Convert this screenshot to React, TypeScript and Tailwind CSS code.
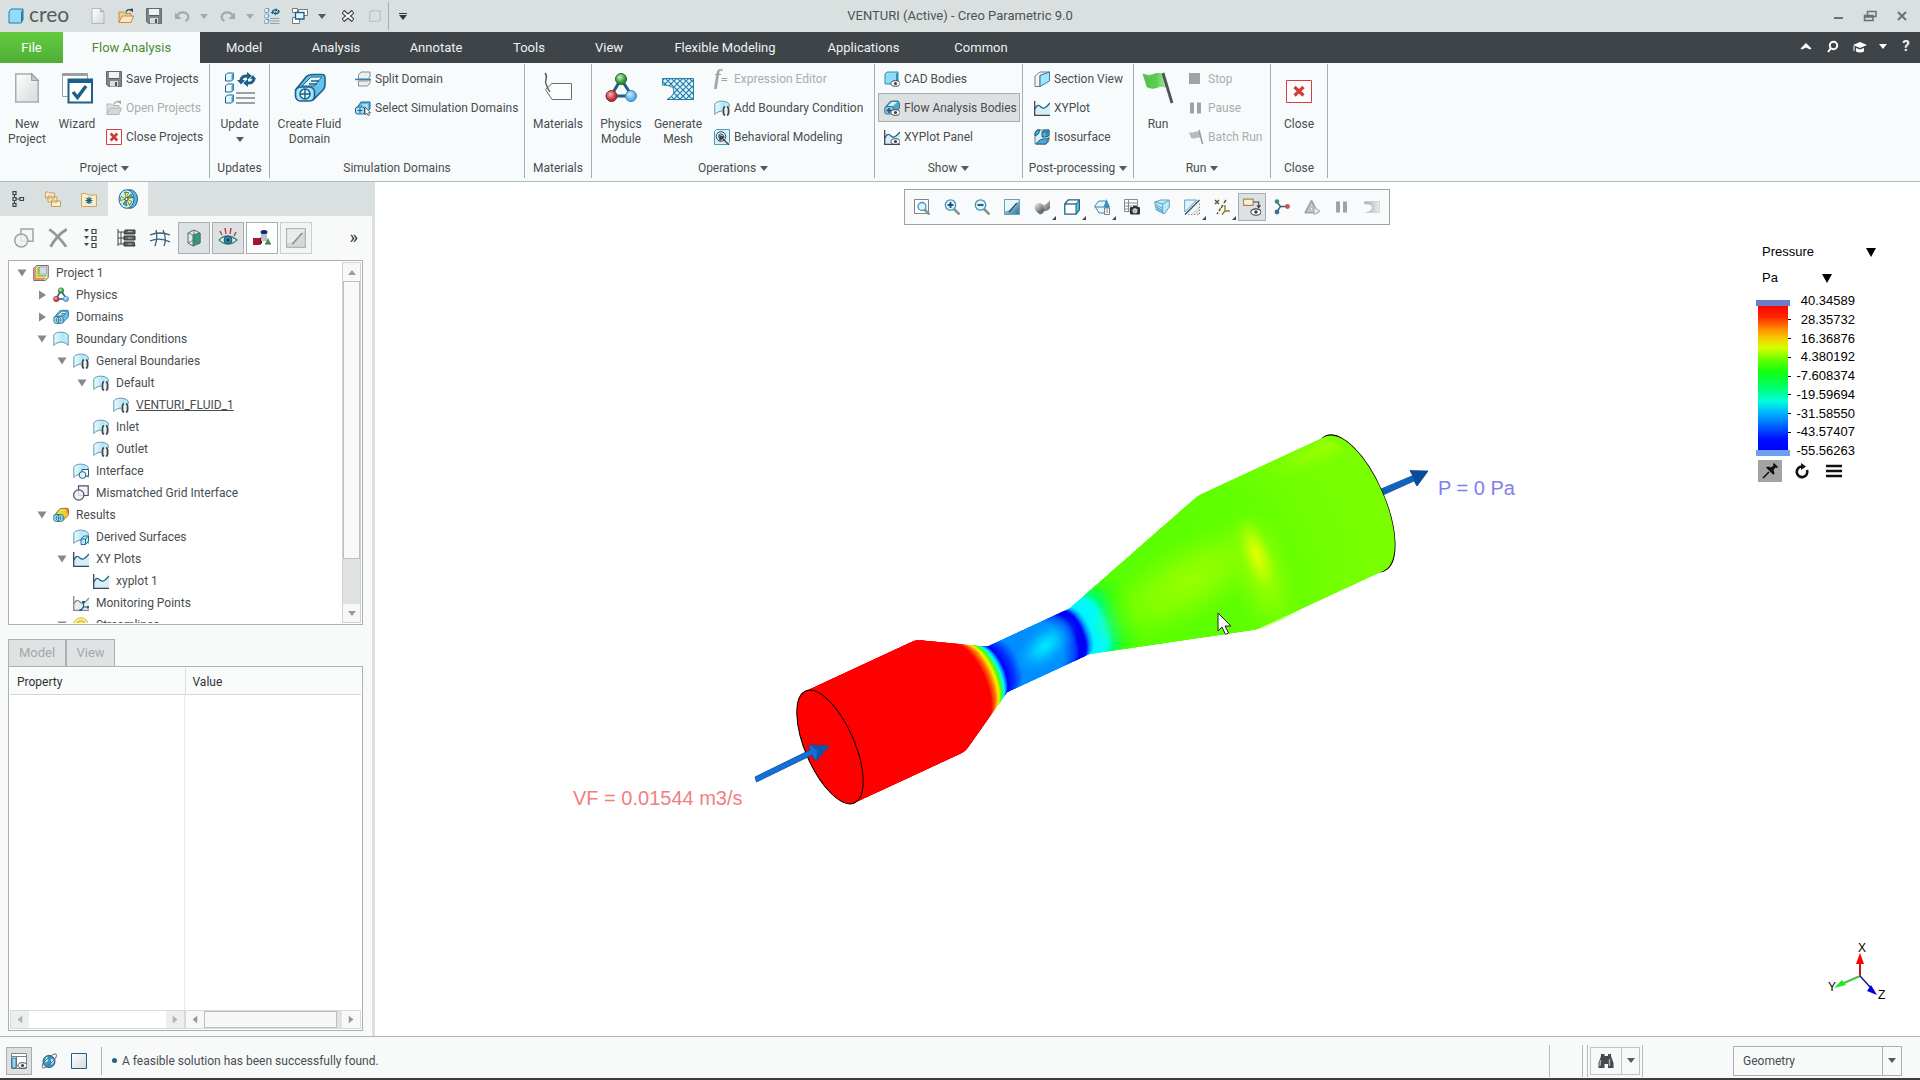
import React, { useState } from "react";

type IconProps = { className?: string };

const DARK = "#3f4549";
const BLUE = "#1b6187";
const SKY = "#a5e2fb";

// Shared svg wrapper, everything is drawn on a 16 or 32 grid
function Svg({ size = 16, className = "w-4 h-4", children }: { size?: number; className?: string; children: React.ReactNode }) {
  return (
    <svg viewBox={`0 0 ${size} ${size}`} className={`${className} shrink-0`} fill="none" aria-hidden="true">
      {children}
    </svg>
  );
}

const Caret = ({ className = "text-[#555a5d]" }: IconProps) => (
  <svg viewBox="0 0 8 5" className={`w-2 h-[5px] shrink-0 ${className}`} aria-hidden="true">
    <path d="M0 0h8L4 5z" fill="currentColor" />
  </svg>
);

/* ---------- file icons ---------- */
const PageIcon = ({ className }: IconProps) => (
  <Svg className={className}>
    <path d="M2 .5h8.500L14 4v11.500H2z" fill="url(#paper)" stroke="#a9adaf" strokeWidth=".8" />
    <path d="M10.500.5V4H14z" fill="#c8ccce" stroke="#999ea1" strokeWidth=".6" />
  </Svg>
);

const FolderIcon = ({ muted }: { muted?: boolean }) => (
  <Svg>
    <path d="M1 14V4h4.500L7 5.500h6V8" fill={muted ? "#e0e2e2" : "#f0cf94"} stroke={muted ? "#b4b7b8" : "#bd8f48"} />
    <path d="M1 14.500 4 8h11.500L13 14.500z" fill={muted ? "#d5d7d8" : "#fbe5bd"} stroke={muted ? "#b4b7b8" : "#bd8f48"} />
    <path d="M8 4.500C8.500 1.500 11 1 13 2.500" stroke={muted ? "#a6a9aa" : DARK} strokeWidth="1.300" />
    <path d="M11.200 1 15 .500V4.500z" fill={muted ? "#a6a9aa" : DARK} />
  </Svg>
);

const SaveIcon = () => (
  <Svg>
    <path d="M.5.500h15v15H2.500l-2-2z" fill="#7f868a" stroke="#62686b" />
    <path d="M3 1h10v6.500H3z" fill="#eff2f2" />
    <path d="M4 10h8v5.500H4z" fill="#d9dddf" />
    <path d="M9 11h2v4H9z" fill="#50565a" />
    <path d="M3 7.500h10" stroke="#555b5e" />
  </Svg>
);

const CloseBox = () => (
  <Svg>
    <path d="M.5.500h15v15H.5z" fill="#fffafa" stroke="#d3403f" />
    <path d="m4.700 4.500 6.600 7m0-7-6.600 7" stroke="#c73b3b" strokeWidth="2.600" />
  </Svg>
);

const CloseBoxLarge = () => (
  <svg viewBox="0 0 26 32" className="w-[26px] h-8" fill="none" aria-hidden="true">
    <path d="M.5 8.500h25v22H.5z" fill="#fff" stroke="#d8403f" />
    <path d="m8.500 15 9 8.500m0-8.500-9 8.500" stroke="#d33d3c" strokeWidth="3.200" />
  </svg>
);

const UndoIcon = ({ flip }: { flip?: boolean }) => (
  <Svg className={flip ? "w-4 h-4 -scale-x-100" : "w-4 h-4"}>
    <path d="M3 8c2-4.500 9-5 11-.5 1 2.500-.5 4.500-2.500 5.500" stroke="#a5a9aa" strokeWidth="2.200" />
    <path d="M1 4.500V11h6.500z" fill="#a5a9aa" />
  </Svg>
);

const UpdateIcon = ({ className }: IconProps) => (
  <Svg size={32} className={className}>
    {[1, 12, 23].map((y) => (
      <g key={y}>
        <path d={`M1.500 ${y + 2}l2-2h6v6l-2 2h-6z`} fill="#eaf8fe" stroke={BLUE} />
        <path d={`M7.500 ${y + 8}v-6l2-2v6z`} fill="#38a5d6" />
      </g>
    ))}
    <path d="M17 9c0-4 3-5.500 7-5M30 6c0 4-3 5.500-7 5" stroke={BLUE} strokeWidth="3" />
    <path d="M23 0l5 4-5 4zM24 7l-5 4 5 4z" fill={BLUE} />
    <path d="M13 8h8l-4 4.500zM26 7h6l-3-4z" fill={BLUE} />
    <path d="M12 21h19M12 26h19M12 31h19" stroke="#9ba0a3" strokeWidth="2" />
  </Svg>
);

const WindowsIcon = () => (
  <Svg>
    <path d="M6.500 1.500h9v6h-9z" fill="#fff" stroke="#73797c" />
    <path d="M.5 9.500h7v6h-7z" fill="#fff" stroke="#73797c" />
    <path d="M.5.500h5v4h-5z" fill="#fff" stroke="#73797c" />
    <path d="M3.500 4.500h8.500v6.500H3.500z" fill="#e4f5fc" stroke={BLUE} strokeWidth="1.300" />
  </Svg>
);

const WizardIcon = () => (
  <Svg size={32} className="w-8 h-8">
    <path d="M1.500 1.500h25v23h-25z" fill="#fff" stroke="#9a9fa2" />
    <path d="M1 1h26v3H1z" fill="#9a9fa2" />
    <path d="M7.500 7.500h23.500v23H7.500z" fill="#fff" stroke={BLUE} strokeWidth="2" />
    <path d="M7 7h25v4H7z" fill={BLUE} />
    <path d="m12 20 4.500 5.500L25 14" stroke={BLUE} strokeWidth="3.500" />
  </Svg>
);

/* ---------- domain icons ---------- */
const DomainIcon = ({ className, rainbow }: IconProps & { rainbow?: boolean }) => (
  <Svg size={32} className={className}>
    <path d="M1.500 18 12 5q2-2.500 7-2.500h9q3 0 3 3.500v7q0 3-2 5L19 28z" fill={rainbow ? "url(#rainbow)" : "#66c2e8"} stroke={rainbow ? "#876f22" : BLUE} strokeWidth="1.600" />
    <path d="m8 14 9-9h11l-8 9z" fill={rainbow ? "#d8ef4a" : "#dff4fc"} stroke={rainbow ? "none" : BLUE} />
    <path d="M15 12h8M17 9h8" stroke={rainbow ? "#f3b22d" : BLUE} strokeWidth="1.500" />
    <rect x="1.500" y="15" width="19" height="14" rx="5" fill={SKY} stroke={BLUE} strokeWidth="1.600" />
    <circle cx="11" cy="22" r="5" fill="#e7f8fe" stroke={BLUE} strokeWidth="1.500" />
    <path d="M11 17v10M6 22h10" stroke={BLUE} strokeWidth="1.500" />
  </Svg>
);

const SplitIcon = () => (
  <Svg>
    <path d="M3.500 4 6 1h9v5l-2.500 2h-9zM3.500 10h9L15 8v4l-2.500 3h-9z" fill="#eceff0" stroke="#878d90" />
    <path d="M0 8.500h16" stroke="#2c83b0" strokeWidth="1.500" />
  </Svg>
);

const SelectDomainIcon = () => (
  <Svg>
    <path d="M1 9 6 2h9v7l-5 5z" fill="#5db8df" stroke={BLUE} />
    <path d="M7 5h5M6 7h6M12 4v6" stroke="#e7f8fe" />
    <rect x=".5" y="7" width="9" height="7" rx="2" fill={SKY} stroke={BLUE} />
    <path d="M5 8v5M2.500 10.500h5" stroke={BLUE} />
    <path d="M10 7v8l2-1.800 1 2.500 1.500-.7-1-2.300h2z" fill="#fff" stroke={DARK} strokeWidth=".8" />
  </Svg>
);

const MaterialsIcon = () => (
  <Svg size={32} className="w-8 h-8">
    <path d="M3.500 17.500 10 11.500h19.500v16H10z" fill="#fcfdfd" stroke="#686e71" />
    <path d="M3 1c4 5-1 7 1 11 1 3 2 5 4 8" stroke="#51575a" strokeWidth="1.300" />
  </Svg>
);

const PhysicsIcon = ({ className }: IconProps) => (
  <Svg size={32} className={className}>
    <path d="M16 7 6 24h21z" stroke={BLUE} strokeWidth="3" />
    <circle cx="16" cy="7" r="5.500" fill="url(#ballG)" stroke="#236b23" />
    <circle cx="6.500" cy="24" r="5.500" fill="url(#ballR)" stroke="#842323" />
    <circle cx="26" cy="24" r="5.500" fill="url(#ballB)" stroke="#3b83b5" />
  </Svg>
);

const MeshIcon = () => (
  <Svg size={32} className="w-8 h-8">
    <path d="M.5 6.500h31v21H5q7-4 7-8.500 0-6-11.500-6z" fill="url(#mesh)" stroke="#2581aa" />
  </Svg>
);

const FxIcon = () => (
  <span className="w-4 h-5 shrink-0 whitespace-nowrap text-[20px] leading-[16px] italic font-bold text-[#9fa3a4] font-['Liberation_Serif',serif]" aria-hidden="true">
    f<span className="text-[12px]">=</span>
  </span>
);

// Curved sheet used by every boundary entry, with a small overlay per kind
const SheetIcon = ({ kind }: { kind?: "brackets" | "interface" | "derived" }) => (
  <Svg>
    <path d="M.8 4C3 .2 12 .2 15.200 4v10.500C12 10 4.500 10 .8 14.500z" fill="url(#sheet)" stroke="#5f99b0" />
    {kind === "brackets" && (
      <>
        <path d="M8 7h8v9H8z" fill="#eef6f9" />
        <path d="M10.800 6.500q-1.800 1.500-1.300 4.500-.5 3 1.300 4.500M13.200 6.500q1.800 1.500 1.300 4.500.5 3-1.300 4.500" stroke={DARK} strokeWidth="1.800" />
      </>
    )}
    {kind === "interface" && (
      <>
        <path d="M9 6.500h6.500V13H9z" fill="#fff" stroke={BLUE} />
        <circle cx="9.500" cy="12" r="3.400" fill="#e1f4fb" stroke={BLUE} />
      </>
    )}
    {kind === "derived" && <path d="m8 10 3-3h4.500v5l-3 3.500H8zM8 10h4.500v5.500M12.500 10l3-3" fill="#b8e8fa" stroke={BLUE} strokeWidth=".9" />}
  </Svg>
);

const BehaviorIcon = () => (
  <Svg>
    <path d="M.5 2.500 2.500.500h13v13l-2 2h-13z" fill="#dceff7" stroke="#4c9abc" />
    <circle cx="7" cy="7.500" r="4.800" stroke={DARK} />
    <circle cx="7" cy="7.500" r="2.500" stroke={BLUE} />
    <path d="m6 7 9 9M6 7v4l3.500-3z" stroke={DARK} strokeWidth="1.400" fill={DARK} />
  </Svg>
);

const Eye = () => (
  <>
    <ellipse cx="11.500" cy="12.500" rx="4.500" ry="2.800" fill="#fff" stroke={DARK} />
    <circle cx="11.500" cy="12.500" r="1.600" fill={DARK} />
  </>
);

const CadIcon = () => (
  <Svg>
    <path d="m1 3 2-2h11v10l-2 2H1z" fill="#8fdbf8" stroke="#2f8fb8" />
    <path d="M12 13V3l2-2v10z" fill="#2f8fb8" />
    <Eye />
  </Svg>
);

const FlowBodiesIcon = () => (
  <Svg>
    <path d="M1 8 5 2.500Q6 1 9 1h5l1.500 2v5L11 13z" fill="#50a9d0" stroke={BLUE} strokeWidth=".8" />
    <path d="m4 6 4-4h5l-4 4z" fill="#d9f3fc" />
    <rect x=".7" y="6.500" width="9" height="7.500" rx="2" fill="#79c9ea" stroke={BLUE} strokeWidth=".8" />
    <path d="M5 8v5M2.500 10.500h5" stroke={DARK} strokeWidth="1.400" />
    <Eye />
  </Svg>
);

const PlotIcon = ({ eye, monitor }: { eye?: boolean; monitor?: boolean }) => (
  <Svg>
    <path d="M1 9c2-5 4-4 6-2s4 2 9-4v12H1z" fill={monitor ? "#ececec" : "#d5eefa"} />
    <path d="M1 9c2-5 4-4 6-2s4 2 9-4" stroke={monitor ? "#84898c" : BLUE} strokeWidth="1.200" />
    <path d="M.7 1v14.400H16" stroke={monitor ? "#84898c" : DARK} strokeWidth="1.300" />
    {eye && <Eye />}
    {monitor && <path d="M10.500 7.500V12H15M10.500 12 8 15" stroke={BLUE} strokeWidth="1.200" />}
    {monitor && <path d="M9 6h3v2H9zM13.800 11H16v2.500h-2.200zM6.500 14H9v2H6.500z" fill={BLUE} />}
  </Svg>
);

const SectionIcon = () => (
  <Svg>
    <path d="m1 5 5-4h9.500L6 4.500v11L1 15.500z" fill="#f4f6f6" stroke="#777d80" />
    <path d="M6 4.500 15.500 1v9L6 15.500z" fill={SKY} stroke="#2b7ea6" />
  </Svg>
);

const IsoIcon = () => (
  <Svg>
    <path d="M1 4 3 1h12v11l-3 3H1z" fill="#d9f1fa" stroke="#777d80" />
    <path d="M1 7q4-1 5-6H3L1 4zM8 3l2-2h5v5l-2 2H8zM2 15q4-6 10-5l3-1-3 6z" fill="#4daad3" stroke={BLUE} />
    <path d="M8 3h5v5M13 3l2-2" stroke={BLUE} strokeWidth=".8" />
  </Svg>
);

const FlagIcon = () => (
  <Svg size={32} className="w-8 h-8">
    <path d="M1 2q6 2.500 10 .5t9-.5l4 13q-5-2-9 .5-5 2-10-.5z" fill="url(#flag)" stroke="#55b34c" strokeWidth=".6" />
    <path d="m21 1 9 30" stroke="#505457" strokeWidth="2.800" />
  </Svg>
);

const BatchIcon = () => (
  <Svg>
    <path d="M1 3q3 1 5 0t6 0l1 6q-3-1-5 0t-5 0z" fill="#b8bbbc" />
    <path d="m11 1 3.500 14" stroke="#999d9f" strokeWidth="1.500" />
  </Svg>
);

const StopIcon = () => (
  <Svg>
    <path d="M1 2h11v11H1z" fill="#a0a3a4" />
  </Svg>
);

const PauseIcon = () => (
  <Svg>
    <path d="M2 2.500h4v11H2zM9 2.500h4v11H9z" fill="#a0a3a4" />
  </Svg>
);

/* ---------- panel icons ---------- */
const TreeTabIcon = () => (
  <Svg>
    <path d="M2 .7h3v3H2zM2 6.500h3v3H2zM2 12.300h3v3H2zM9 6.500h3.500v3H9z" stroke={DARK} strokeWidth="1.200" />
    <path d="M3.500 4v2.500M3.500 9.500V12M5 8h4" stroke={DARK} />
  </Svg>
);

const FoldersTabIcon = () => (
  <Svg>
    <path d="M.5 1h3l1 1h5v5h-9zM3 5h3l1 1h5v5H3zM6.500 9h3l1 1h5v5.500h-9z" fill="#faebcb" stroke="#c79e57" />
  </Svg>
);

const FavoritesTabIcon = () => (
  <Svg>
    <path d="M.5 2.500h5L7 4h8.500v11.500H.5z" fill="#faebcb" stroke="#c9a866" />
    <path d="M8 6v7M4.500 9.500h7M5.500 7l5 5M10.500 7l-5 5" stroke={BLUE} strokeWidth="1.200" />
  </Svg>
);

const FanIcon = () => (
  <Svg size={20} className="w-5 h-5">
    <ellipse cx="12" cy="10" rx="7.500" ry="9.300" fill="#56bbe8" stroke={BLUE} />
    <ellipse cx="8.500" cy="10" rx="7.500" ry="9.300" fill="#c6eefc" stroke={BLUE} />
    <path d="m8.500 9-2-6 4 .5zM9 9l4-4 2 4zM9 10.500l5 2-2.500 4zM8 11l1 6-4-2zM7.500 10l-5 1.500.5-4z" fill="#54b948" stroke={DARK} strokeWidth=".6" />
    <path d="m8.500 9-1-5 2.500 0zM9 10.500l4.500 2-2 3zM7.500 10l-4.500 1v-3z" fill="#ffe13b" />
    <circle cx="8.500" cy="10" r="1.600" fill="#fff" stroke={DARK} />
  </Svg>
);

const ShapesIcon = ({ color = "#a0a4a6", className = "w-5 h-5" }: { color?: string; className?: string }) => (
  <Svg className={className}>
    <path d="M5.500.8h9.700v9.700H5.500z" fill="#f4f6f6" stroke={color} strokeWidth="1.200" />
    <circle cx="5.800" cy="10" r="5.200" fill="#f0f2f3cc" stroke={color} strokeWidth="1.200" />
  </Svg>
);

const DeleteIcon = () => (
  <Svg className="w-5 h-5">
    <path d="M1 1q7 5 13.500 14M15 1Q7 6 2 15" stroke="#939799" strokeWidth="2.200" />
  </Svg>
);

const ListIcon = () => (
  <Svg size={20} className="w-5 h-5">
    <path d="M10 1.500h4v4h-4zM10 8.500h4v4h-4zM10 15.500h4v4h-4z" stroke={DARK} strokeWidth="1.200" />
    <path d="M2 1h5L4.500 4zM2 8h5l-2.500 3zM2 15h5l-2.500 3z" fill={DARK} />
  </Svg>
);

const StackIcon = () => (
  <Svg size={20} className="w-5 h-5">
    <path d="M2 1v17M2 4h6M2 10h6M2 16h6M5 4v12" stroke={DARK} />
    <path d="M9 2h10v4H8zM8 8h11v4H8zM8 14h10l1 4H8z" fill="#5c6265" stroke="#333839" />
    <path d="M12 3.500h4M12 10h4M12 16h4" stroke="#aab0b3" />
  </Svg>
);

const GridCurveIcon = () => (
  <Svg size={20} className="w-5 h-5">
    <path d="M0 7q10-4 20 0M0 13q10-4 20 1M6 2q2 8-1 16M13 2q4 8 1 16" stroke="#366078" strokeWidth="1.300" />
  </Svg>
);

const CubeIcon = () => (
  <Svg size={20} className="w-5 h-5">
    <path d="m4 5 6-3 6 3v10l-7 3-5-3z" fill="#dfe9e8" stroke="#547075" />
    <path d="m9 7 7-2v10l-7 3z" fill="#2f9d72" stroke="#547075" />
    <path d="m4 5 5 2M10 2v10l-6 3M10 12l6 3" stroke="#547075" strokeWidth=".8" />
  </Svg>
);

const BigEyeIcon = () => (
  <Svg size={20} className="w-5 h-5">
    <path d="M1 12q8-8 18 0-9 8-18 0" fill="#e8f2f0" stroke="#3c8a84" strokeWidth="1.500" />
    <circle cx="10" cy="12" r="4" fill="#3b83ab" stroke="#21566f" />
    <circle cx="10" cy="12" r="1.500" fill="#17384b" />
    <path d="M4 7 2 3M8 6 7 0M12 6l1-6M16 8l2-4" stroke="#b63b47" strokeWidth="1.400" />
  </Svg>
);

const PartsIcon = () => (
  <Svg size={20} className="w-5 h-5">
    <path d="M1 10h7v7H1z" fill="#a3182a" />
    <path d="m8 10 2-2v7l-2 2z" fill="#6e0e1b" />
    <path d="M9 4h6v9H9z" fill="#b9c2cb" />
    <ellipse cx="12" cy="4" rx="3.500" ry="2" fill="#17207c" />
    <path d="m13 16 3-6 3 6z" fill="#3a9250" />
    <path d="M13 16h6" stroke="#5a6164" />
  </Svg>
);

const ShadeIcon = ({ muted }: { muted?: boolean }) => (
  <Svg className={muted ? "w-5 h-5" : "w-4 h-4"}>
    <path d="M.5.500h15v15H.5z" fill={muted ? "#d5d8d9" : "url(#shade)"} stroke={muted ? "#b1b5b6" : "#6a9fb7"} />
    <path d="M1 1h14Q11 12 1 12z" fill={muted ? "#e9ebec" : "#eaf7fc"} />
    <path d="m5 13 8-9" stroke={muted ? "#8d9193" : "#17516f"} strokeWidth="1.400" />
  </Svg>
);

const ProjectIcon = () => (
  <Svg>
    <path d="m.7 3 3-2.500h11.600v12l-3 3H.7z" fill="#d9dcdd" stroke="#6d7275" />
    <path d="M1.200 3.500 3 2v11h9.500L11 15H1.200z" fill="#f28b5b" />
    <path d="M3 2.500h1.500v9H13l-1 1.500H3z" fill="#ecdf52" />
    <path d="M4.500 2h1.500v8h8l-1 1.500H4.500z" fill="#82cc5d" />
    <path d="M6.500 2h7v7h-7z" fill="#d9dcdd" stroke="#8b9092" strokeWidth=".6" />
  </Svg>
);

const StreamIcon = () => (
  <Svg>
    <circle cx="8" cy="8" r="7.300" fill="#faf07a" stroke="#d6c33d" />
    <circle cx="8" cy="8" r="4" stroke="#e99b3a" strokeWidth="1.200" />
  </Svg>
);

/* ---------- view toolbar icons ---------- */
const Lens = ({ kind }: { kind: "fit" | "in" | "out" }) => (
  <Svg>
    {kind === "fit" && <path d="M.5.500h14v14H.5z" fill="#fff" stroke="#7d8386" />}
    <path d="m10 10 5.500 5.500" stroke="#8c9194" strokeWidth="2.600" />
    <circle cx={kind === "fit" ? 8 : 6.500} cy={kind === "fit" ? 7.500 : 6} r={kind === "fit" ? 4 : 5.200} fill="#dff3fc" stroke="#4a92b6" strokeWidth="1.300" />
    {kind !== "fit" && <path d="M3.500 6h6" stroke="#124d6d" strokeWidth="1.800" />}
    {kind === "in" && <path d="M6.500 3v6" stroke="#124d6d" strokeWidth="1.800" />}
  </Svg>
);

const RenderIcon = () => (
  <Svg>
    <path d="M7 6q5 1 9-5v8q-3 4-8 3z" fill="url(#metal)" />
    <circle cx="5" cy="8.500" r="4.500" fill="url(#metal)" />
    <path d="M2 12q5 1 7-4l2 3q-2 4-5 4.500z" fill="#6a6e70" />
  </Svg>
);

const BoxIcon = () => (
  <Svg>
    <path d="m.8 5 3.500-4.200h11v10L12 15.200H.8z" fill="#fff" stroke={BLUE} strokeWidth="1.300" />
    <path d="M12 15V5l3.300-4.200v10z" fill="#65b9de" stroke={BLUE} />
    <path d="M.8 5H12" stroke={BLUE} strokeWidth="1.300" />
  </Svg>
);

const OrientIcon = () => (
  <Svg>
    <path d="m.7 7 4-5h7l3 5v7H5z" fill="#e3f5fc" stroke="#3a87ab" />
    <path d="M12.500 0 16 8q-3 2-6.500 0z" fill="#3691bc" />
    <path d="M.7 8h10" stroke="#3a87ab" />
    <path d="M10.500 9h5v6.500h-5z" fill="#fff" stroke="#777c7f" />
    <path d="M12 11h2M12 13h2" stroke="#777c7f" />
  </Svg>
);

const CameraListIcon = () => (
  <Svg>
    <path d="M.5.500h13v12H.5zM.5 4h13M.5 7h8M.5 10h6M4.500.5v12" fill="#fff" stroke="#878c8f" />
    <rect x="6" y="8" width="10" height="7.500" rx="1" fill="#303436" />
    <path d="M9 6.500h4V9H9z" fill="#303436" />
    <circle cx="11" cy="11.800" r="2.200" fill="#b7bcbe" stroke="#fff" strokeWidth=".6" />
  </Svg>
);

const ClipIcon = () => (
  <Svg>
    <path d="m.7 3 6-2h8.600v7l-5 7-8-4z" fill="#bfe8f8" stroke="#5fa3c0" />
    <path d="m.7 3 8 2 6-3.500M8.700 5v9" stroke="#5fa3c0" />
    <path d="m2 8 6 3M3 10l6 3M2 6l6 3" stroke="#438db1" strokeWidth=".8" />
  </Svg>
);

const DatumIcon = () => (
  <Svg>
    <path d="M.7 13V1h12z" fill="#e3f5fc" stroke="#62a2bf" />
    <path d="M1 15.500 15.500 1" stroke="#2e5a70" strokeWidth="1.500" />
    <path d="M4 15.500h11.500V4" stroke="#8d9294" strokeDasharray="1.500 1.500" />
    <path d="M7 15 15 7v8z" fill="#dfe1e2" />
  </Svg>
);

const AxesIcon = () => (
  <Svg>
    <path d="m1 1 4 4M5 1 1 5M10 4l2-3M7 9l2-3M5 12l1.500-2.500M3 15l1-1.500" stroke="#665c22" strokeWidth="1.500" />
    <path d="M11 6v6h5M11 12l-3 3.500" stroke="#8b7c31" strokeWidth="1.400" />
  </Svg>
);

const AnnotationIcon = () => (
  <Svg className="w-[18px] h-[18px]">
    <path d="M.5 1h8.500v5.500H.5z" fill="#fff0d4" stroke="#9f8a65" />
    <path d="M9 3.500h5V7" stroke={DARK} />
    <path d="M12 6.500h4L14 9.500z" fill={DARK} />
    <Eye />
  </Svg>
);

const SpinIcon = () => (
  <Svg>
    <path d="m6.500 7.500-4-5m4 5-4 6m4-6h7" stroke="#37617a" strokeWidth="1.400" />
    <circle cx="3" cy="2.500" r="2.300" fill="#359368" />
    <circle cx="3" cy="13" r="2.400" fill="#396f9f" />
    <circle cx="13.500" cy="7.500" r="2.400" fill="#c6505b" />
  </Svg>
);

const WarnIcon = () => (
  <Svg>
    <path d="M7.500 2 1.500 13.500h12z" fill="#d9dbdc" stroke="#a3a7a9" strokeWidth="2.200" strokeLinejoin="round" />
    <path d="m7.500 7-2 4h4z" fill="#fff" stroke="#a3a7a9" />
    <path d="M10 8.500v7l6-3.500z" fill="#eceeee" stroke="#a7abad" />
  </Svg>
);

const ResultMutedIcon = () => (
  <Svg>
    <path d="M.5 2.500h15v11H2q6-1 6-5T.5 5z" fill="url(#metalSoft)" stroke="#c3c6c8" strokeWidth=".6" />
  </Svg>
);

/* ---------- ribbon ---------- */
type Small = { icon: React.ReactNode; label: string; muted?: boolean; active?: boolean };

function SmallList({ items, className = "" }: { items: Small[]; className?: string }) {
  return (
    <div className={`flex flex-col ${className}`}>
      {items.map((item) => (
        <button
          key={item.label}
          type="button"
          disabled={item.muted}
          className={`flex items-center gap-1 h-[29px] pl-[5px] text-left whitespace-nowrap border ${
            item.active ? "bg-[#dde0e1] border-[#a8acae]" : "border-transparent"
          } ${item.muted ? "text-[#a9adaf]" : ""}`}
        >
          {item.icon}
          {item.label}
        </button>
      ))}
    </div>
  );
}

function BigButton({ icon, label, className, caret }: { icon: React.ReactNode; label: string; className: string; caret?: boolean }) {
  return (
    <button type="button" className={`flex flex-col items-center pt-2 leading-[15px] text-center ${className}`}>
      <span className="flex items-center justify-center h-8 mb-[13px]">{icon}</span>
      <span>{label}</span>
      {caret && <Caret className="mt-[5px] text-[#555a5d]" />}
    </button>
  );
}

function Group({ label, caret, className, children }: { label: string; caret?: boolean; className: string; children: React.ReactNode }) {
  return (
    <section className={`flex flex-col shrink-0 border-r border-[#a9afb2] ${className}`}>
      <div className="flex flex-1">{children}</div>
      <div className="flex items-center justify-center gap-1 h-5">
        {label}
        {caret && <Caret />}
      </div>
    </section>
  );
}

function Ribbon() {
  return (
    <div className="flex h-[119px] pt-px pb-[3px] bg-[#f8fbfb] border-b border-[#afb8bb]">
      <Group label="Project" caret className="w-[210px]">
        <BigButton icon={<PageIcon className="w-[30px] h-8" />} label="New Project" className="w-[54px] px-1" />
        <BigButton icon={<WizardIcon />} label="Wizard" className="w-[46px]" />
        <SmallList
          items={[
            { icon: <SaveIcon />, label: "Save Projects" },
            { icon: <FolderIcon muted />, label: "Open Projects", muted: true },
            { icon: <CloseBox />, label: "Close Projects" },
          ]}
        />
      </Group>
      <Group label="Updates" className="w-[60px]">
        <BigButton icon={<UpdateIcon className="w-8 h-8" />} label="Update" className="w-full" caret />
      </Group>
      <Group label="Simulation Domains" className="w-[255px]">
        <BigButton icon={<DomainIcon className="w-8 h-8" />} label="Create Fluid Domain" className="w-[79px] px-1" />
        <SmallList
          items={[
            { icon: <SplitIcon />, label: "Split Domain" },
            { icon: <SelectDomainIcon />, label: "Select Simulation Domains" },
          ]}
        />
      </Group>
      <Group label="Materials" className="w-[67px]">
        <BigButton icon={<MaterialsIcon />} label="Materials" className="w-full" />
      </Group>
      <Group label="Operations" caret className="w-[283px]">
        <BigButton icon={<PhysicsIcon className="w-8 h-8" />} label="Physics Module" className="w-[58px] px-1" />
        <BigButton icon={<MeshIcon />} label="Generate Mesh" className="w-[56px]" />
        <SmallList
          className="ml-[2px]"
          items={[
            { icon: <FxIcon />, label: "Expression Editor", muted: true },
            { icon: <SheetIcon kind="brackets" />, label: "Add Boundary Condition" },
            { icon: <BehaviorIcon />, label: "Behavioral Modeling" },
          ]}
        />
      </Group>
      <Group label="Show" caret className="w-[148px]">
        <SmallList
          className="w-[142px] ml-[3px]"
          items={[
            { icon: <CadIcon />, label: "CAD Bodies" },
            { icon: <FlowBodiesIcon />, label: "Flow Analysis Bodies", active: true },
            { icon: <PlotIcon eye />, label: "XYPlot Panel" },
          ]}
        />
      </Group>
      <Group label="Post-processing" caret className="w-[111px]">
        <SmallList
          className="ml-[5px]"
          items={[
            { icon: <SectionIcon />, label: "Section View" },
            { icon: <PlotIcon />, label: "XYPlot" },
            { icon: <IsoIcon />, label: "Isosurface" },
          ]}
        />
      </Group>
      <Group label="Run" caret className="w-[137px]">
        <BigButton icon={<FlagIcon />} label="Run" className="w-[48px]" />
        <SmallList
          items={[
            { icon: <StopIcon />, label: "Stop", muted: true },
            { icon: <PauseIcon />, label: "Pause", muted: true },
            { icon: <BatchIcon />, label: "Batch Run", muted: true },
          ]}
        />
      </Group>
      <Group label="Close" className="w-[57px]">
        <BigButton icon={<CloseBoxLarge />} label="Close" className="w-full" />
      </Group>
    </div>
  );
}

/* ---------- title bar and tabs ---------- */
function TitleBar() {
  return (
    <header className="flex items-center relative h-8 bg-[#dae0df]">
      <div className="flex items-center gap-[5px] w-[86px] pl-2 text-[21px] text-[#565b5e] font-[Lato,sans-serif]">
        <Svg>
          <path d="m1 4 2-3h12v11l-2 3H1z" fill="#93dcf9" stroke="#2a7da5" />
          <path d="M13 15V4l2-3v11z" fill="#2a7da5" />
        </Svg>
        <span className="leading-5 pb-1">creo</span>
      </div>
      <div className="flex items-center text-[13px]">
        <button type="button" aria-label="New" className="flex justify-center w-6"><PageIcon /></button>
        <button type="button" aria-label="Open" className="flex justify-center w-8"><FolderIcon /></button>
        <button type="button" aria-label="Save" className="flex justify-center w-6"><SaveIcon /></button>
        <button type="button" aria-label="Undo" className="flex justify-center w-8"><UndoIcon /></button>
        <button type="button" aria-label="Undo list" className="flex justify-center w-3"><Caret className="text-[#a5a9aa]" /></button>
        <button type="button" aria-label="Redo" className="flex justify-center w-9"><UndoIcon flip /></button>
        <button type="button" aria-label="Redo list" className="flex justify-center w-2"><Caret className="text-[#a5a9aa]" /></button>
        <button type="button" aria-label="Regenerate" className="flex justify-center w-9"><UpdateIcon className="w-4 h-4" /></button>
        <button type="button" aria-label="Windows" className="flex justify-center w-5"><WindowsIcon /></button>
        <button type="button" aria-label="Window list" className="flex justify-center w-6"><Caret /></button>
        <button type="button" aria-label="Close window" className="flex justify-center w-7">
          <Svg className="w-3 h-3">
            <path d="m1 2 14 12M15 2 1 14" stroke={DARK} strokeWidth="6" />
            <path d="m2 3 12 10M14 3 2 13" stroke="#fff" strokeWidth="2.800" />
          </Svg>
        </button>
        <button type="button" aria-label="Bodies" className="flex justify-center w-[26px]">
          <Svg className="w-3 h-3"><path d="M1 3 3 1h12v12l-2 2H1z" stroke="#b9bdbe" strokeWidth="1.500" /></Svg>
        </button>
        <span className="w-px h-7 bg-[#a7acad]" />
        <button type="button" aria-label="Customize" className="flex flex-col items-center w-7 gap-px text-[#33383a]">
          <span className="w-2 h-px bg-current" />
          <Caret className="text-[#33383a]" />
        </button>
      </div>
      <h1 className="absolute inset-x-0 text-center text-[13px] text-[#4d5255] pointer-events-none">VENTURI (Active) - Creo Parametric 9.0</h1>
      <div className="flex items-center gap-4 ml-auto pr-[10px]">
        <button type="button" aria-label="Minimize"><Svg><path d="M4 10h9" stroke="#6b7072" strokeWidth="2" /></Svg></button>
        <button type="button" aria-label="Restore"><Svg><path d="M5.500 7V3.500h8.500v5h-3M2.500 7.500h8.500v5H2.500zM2.500 9h8.500" stroke="#6b7072" strokeWidth="1.500" /></Svg></button>
        <button type="button" aria-label="Close"><Svg><path d="m4 4 8 8M12 4l-8 8" stroke="#6b7072" strokeWidth="2" /></Svg></button>
      </div>
    </header>
  );
}

const TABS = [
  { label: "Model", width: "w-[88px]" },
  { label: "Analysis", width: "w-[96px]" },
  { label: "Annotate", width: "w-[104px]" },
  { label: "Tools", width: "w-[82px]" },
  { label: "View", width: "w-[78px]" },
  { label: "Flexible Modeling", width: "w-[154px]" },
  { label: "Applications", width: "w-[123px]" },
  { label: "Common", width: "w-[112px]" },
];

function TabBar() {
  return (
    <nav className="flex h-[31px] bg-[#3e4448] text-[13px] text-[#eef1f2]">
      <button type="button" className="w-[63px] bg-linear-to-b from-[#63cc3d] to-[#4fae38] text-white">File</button>
      <button type="button" className="w-[137px] bg-[#f8fbfb] text-[#4c8a35]">Flow Analysis</button>
      {TABS.map((tab) => (
        <button key={tab.label} type="button" className={tab.width}>{tab.label}</button>
      ))}
      <div className="flex items-center gap-[11px] ml-auto pr-[6px] pb-[2px]">
        <button type="button" aria-label="Collapse ribbon"><Svg><path d="M2.500 9.500 8 4l5.500 5.500-1.500 1-4-2-4 2z" fill="#fff" /></Svg></button>
        <button type="button" aria-label="Search">
          <Svg><circle cx="8.500" cy="6.500" r="3.700" stroke="#fff" strokeWidth="2" /><path d="m6 9-3 4" stroke="#fff" strokeWidth="2" /></Svg>
        </button>
        <button type="button" aria-label="Learning">
          <Svg><path d="m1 6 7-3 7 3-7 3zM4 9v3.500q4 2 8 0V9L8 10.500zM1.500 7h1v5h-1z" fill="#fff" /></Svg>
        </button>
        <button type="button" aria-label="Learning list"><Caret className="text-white" /></button>
        <button type="button" aria-label="Help" className="w-4 font-bold text-[15px]">?</button>
      </div>
    </nav>
  );
}

/* ---------- left panel ---------- */
type Node = { label: string; level: number; icon: React.ReactNode; open?: boolean; closed?: boolean; selected?: boolean };

const NODES: Node[] = [
  { label: "Project 1", level: 0, icon: <ProjectIcon />, open: true },
  { label: "Physics", level: 1, icon: <PhysicsIcon className="w-4 h-4" />, closed: true },
  { label: "Domains", level: 1, icon: <DomainIcon className="w-4 h-4" />, closed: true },
  { label: "Boundary Conditions", level: 1, icon: <SheetIcon />, open: true },
  { label: "General Boundaries", level: 2, icon: <SheetIcon kind="brackets" />, open: true },
  { label: "Default", level: 3, icon: <SheetIcon kind="brackets" />, open: true },
  { label: "VENTURI_FLUID_1", level: 4, icon: <SheetIcon kind="brackets" />, selected: true },
  { label: "Inlet", level: 3, icon: <SheetIcon kind="brackets" /> },
  { label: "Outlet", level: 3, icon: <SheetIcon kind="brackets" /> },
  { label: "Interface", level: 2, icon: <SheetIcon kind="interface" /> },
  { label: "Mismatched Grid Interface", level: 2, icon: <ShapesIcon color="#514a75" className="w-4 h-4" /> },
  { label: "Results", level: 1, icon: <DomainIcon className="w-4 h-4" rainbow />, open: true },
  { label: "Derived Surfaces", level: 2, icon: <SheetIcon kind="derived" /> },
  { label: "XY Plots", level: 2, icon: <PlotIcon />, open: true },
  { label: "xyplot 1", level: 3, icon: <PlotIcon /> },
  { label: "Monitoring Points", level: 2, icon: <PlotIcon monitor /> },
  { label: "Streamlines", level: 2, icon: <StreamIcon />, open: true },
];

// 20px per level
const INDENT = ["pl-[2px]", "pl-[22px]", "pl-[42px]", "pl-[62px]", "pl-[82px]"];

function Triangle({ node }: { node: Node }) {
  return (
    <svg viewBox="0 0 10 10" className="w-[10px] h-[10px] ml-[5px] mr-[6px] shrink-0" fill="#85898c" aria-hidden="true">
      {node.open && <path d="M.5 1.500h9L5 8.500z" />}
      {node.closed && <path d="M2 .5v9l7-4.500z" />}
    </svg>
  );
}

function Tree() {
  return (
    <div className="flex h-[365px] ml-2 mr-[9px] p-px border border-[#abb0b2] bg-white">
      <ul className="flex-1 overflow-hidden">
        {NODES.map((node) => (
          <li key={node.label} className={`flex items-center h-[22px] ${INDENT[node.level]}`}>
            <Triangle node={node} />
            {node.icon}
            <span className={`ml-[7px] whitespace-nowrap ${node.selected ? "underline" : ""}`}>{node.label}</span>
          </li>
        ))}
      </ul>
      <div className="flex flex-col w-[19px] border border-[#cfd3d4] bg-[#dfe1e2]">
        <button type="button" aria-label="Scroll up" className="flex items-center justify-center h-[18px] bg-[#f8f8f8]"><Caret className="rotate-180 text-[#9a9d9e]" /></button>
        <div className="h-[278px] border border-[#bcc0c1] bg-[#f8f8f8]" />
        <button type="button" aria-label="Scroll down" className="flex items-center justify-center h-[18px] mt-auto bg-[#f8f8f8]"><Caret className="text-[#9a9d9e]" /></button>
      </div>
    </div>
  );
}

const arrowClass = "flex items-center justify-center w-[18px] shrink-0";

function PropertyTable() {
  return (
    <div className="flex flex-col flex-1 ml-2 mr-[9px] p-px border border-[#abb0b2] bg-white">
      <table className="w-full text-left text-[#303436]">
        <thead>
          <tr className="h-[26px] border-b border-[#d5d8d9] bg-[#f9fafa]">
            <th className="w-[175px] pl-[7px] pt-[2px] font-normal border-r border-[#dcdfe0]">Property</th>
            <th className="pl-[7px] pt-[2px] font-normal">Value</th>
          </tr>
        </thead>
      </table>
      <div className="w-[175px] flex-1 border-r border-[#e8eaea]" />
      <div className="flex h-[19px]">
        <div className="flex w-[175px] border border-[#d6dbdc]">
          <button type="button" aria-label="Scroll left" className={`${arrowClass} bg-[#eceeef]`}><Caret className="rotate-90 text-[#b0b3b5]" /></button>
          <span className="flex-1" />
          <button type="button" aria-label="Scroll right" className={`${arrowClass} bg-[#eceeef]`}><Caret className="-rotate-90 text-[#b0b3b5]" /></button>
        </div>
        <div className="flex flex-1 border border-[#d6dbdc] bg-[#e0e2e3]">
          <button type="button" aria-label="Scroll left" className={`${arrowClass} bg-[#f8f8f8]`}><Caret className="rotate-90 text-[#96999b]" /></button>
          <span className="flex-1 mr-[5px] border border-[#bcc0c1] bg-[#f7f7f7]" />
          <button type="button" aria-label="Scroll right" className={`${arrowClass} bg-[#f8f8f8]`}><Caret className="-rotate-90 text-[#96999b]" /></button>
        </div>
      </div>
    </div>
  );
}

function LeftPanel() {
  const tool = "flex items-center justify-center w-8 h-8 border";
  return (
    <aside className="flex flex-col w-[375px] shrink-0 pb-[5px] bg-[#f8fafa] border-r-3 border-[#dadfe0]">
      <div className="flex h-[34px] pl-[2px] bg-[#dae0df]">
        <button type="button" aria-label="Model tree" className="flex items-center justify-center w-[34px]"><TreeTabIcon /></button>
        <button type="button" aria-label="Folders" className="flex items-center justify-center w-[34px]"><FoldersTabIcon /></button>
        <button type="button" aria-label="Favorites" className="flex items-center justify-center w-[38px]"><FavoritesTabIcon /></button>
        <button type="button" aria-label="Flow analysis" className="flex items-center justify-center w-10 bg-[#f8fafa]"><FanIcon /></button>
      </div>
      <div className="flex items-center gap-[2px] h-11 pl-2">
        <button type="button" aria-label="Shapes" className={`${tool} border-transparent`}><ShapesIcon /></button>
        <button type="button" aria-label="Delete" className={`${tool} border-transparent`}><DeleteIcon /></button>
        <button type="button" aria-label="List" className={`${tool} border-transparent`}><ListIcon /></button>
        <button type="button" aria-label="Stack" className={`${tool} border-transparent`}><StackIcon /></button>
        <button type="button" aria-label="Grid" className={`${tool} border-transparent`}><GridCurveIcon /></button>
        <button type="button" aria-label="Body" className={`${tool} border-[#a9adaf] bg-[#dde1e2]`}><CubeIcon /></button>
        <button type="button" aria-label="Visibility" className={`${tool} border-[#a9adaf] bg-[#dde1e2]`}><BigEyeIcon /></button>
        <button type="button" aria-label="Parts" className={`${tool} border-[#a9adaf] bg-white`}><PartsIcon /></button>
        <button type="button" aria-label="Shade" className={`${tool} border-[#cbcfd0] bg-[#f3f5f5]`}><ShadeIcon muted /></button>
        <button type="button" aria-label="More" className="ml-auto mr-[14px] pb-1 text-[18px] text-[#303436]">»</button>
      </div>
      <Tree />
      <div className="flex mt-[14px] ml-2 text-[13px] text-[#a4a8aa]">
        <button type="button" disabled className="w-[58px] h-[27px] border border-b-0 border-[#abb0b2] bg-[#e0e3e4]">Model</button>
        <button type="button" disabled className="w-[49px] h-[27px] border border-b-0 border-[#abb0b2] bg-[#e0e3e4]">View</button>
      </div>
      <PropertyTable />
    </aside>
  );
}

/* ---------- pressure field ---------- */
// axis position (x of section centre), rgb
const FIELD: [number, number[]][] = [
  [830, [255, 0, 0]],
  [969, [255, 0, 0]],
  [975, [255, 110, 0]],
  [980, [255, 240, 0]],
  [984, [80, 255, 0]],
  [988, [0, 255, 255]],
  [991, [0, 150, 255]],
  [994, [0, 0, 255]],
  [1001, [0, 50, 255]],
  [1010, [0, 140, 255]],
  [1050, [0, 145, 255]],
  [1062, [0, 70, 255]],
  [1067, [0, 0, 240]],
  [1073, [0, 0, 255]],
  [1077, [0, 160, 255]],
  [1081, [0, 245, 255]],
  [1092, [0, 255, 240]],
  [1098, [0, 255, 110]],
  [1108, [50, 255, 20]],
  [1122, [90, 255, 0]],
  [1240, [96, 255, 0]],
  [1290, [116, 255, 0]],
  [1355, [122, 255, 0]],
];

// axis position, section radius
const PROFILE: [number, number][] = [
  [830, 61],
  [938, 61],
  [996, 25],
  [1080, 25],
  [1229, 73],
  [1355, 73],
];

function colorAt(x: number) {
  const i = Math.max(1, FIELD.findIndex(([p]) => p >= x));
  const [x0, a] = FIELD[i - 1];
  const [x1, b] = FIELD[i];
  const t = (x - x0) / (x1 - x0);
  return `rgb(${a.map((c, k) => Math.round(c + (b[k] - c) * t)).join(",")})`;
}

function radiusAt(x: number) {
  const i = Math.max(1, PROFILE.findIndex(([p]) => p >= x));
  const [x0, a] = PROFILE[i - 1];
  const [x1, b] = PROFILE[i];
  return a + ((b - a) * (x - x0)) / (x1 - x0);
}

const axisY = (x: number) => 747 - (x - 830) * 0.464;

// Back to front, so every section covers the one behind it
const SECTIONS = Array.from({ length: 526 }, (_, i) => 1355 - i);

function Venturi() {
  return (
    <svg viewBox="740 420 720 410" className="absolute left-[365px] top-[238px] w-[720px] h-[410px]" role="img" aria-label="Venturi pressure field">
      <defs>
        <radialGradient id="hot"><stop offset="0" stopColor="#eaff00" /><stop offset=".45" stopColor="#c8ff00" stopOpacity=".7" /><stop offset="1" stopColor="#90ff00" stopOpacity="0" /></radialGradient>
        <radialGradient id="warm"><stop offset="0" stopColor="#98ff00" /><stop offset=".4" stopColor="#92ff00" stopOpacity=".75" /><stop offset="1" stopColor="#80ff00" stopOpacity="0" /></radialGradient>
        <radialGradient id="cool"><stop offset="0" stopColor="#00ecff" /><stop offset=".3" stopColor="#00d8ff" stopOpacity=".8" /><stop offset="1" stopColor="#0090ff" stopOpacity="0" /></radialGradient>
        <clipPath id="body"><path d="m986 648 84-37 129-117 127-57 34 20 35 85-9 31-128 58-168 25-84 38z" /></clipPath>
      </defs>
      <path d="m1381 489 2 6 31-14 3 5 11-15-18-.5 3 5z" fill="#0f63c0" stroke="#0a4d96" strokeWidth=".8" />
      <path d="m1410 471 18 0-11 15-3-7z" fill="#0a4a96" />
      {/* outlet rim, only its right half stays visible */}
      <ellipse cx="1355" cy={axisY(1355)} rx="73" ry="29" transform={`rotate(66.500 1355 ${axisY(1355)})`} stroke="#000" strokeWidth="2.200" />
      {SECTIONS.map((x) => {
        const r = radiusAt(x);
        const y = axisY(x);
        return <ellipse key={x} cx={x} cy={y} rx={r} ry={r * 0.404} transform={`rotate(66.500 ${x} ${y})`} fill={colorAt(x)} />;
      })}
      <g clipPath="url(#body)">
        <ellipse cx="1045" cy="646" rx="40" ry="22" transform="rotate(-40 1045 646)" fill="url(#cool)" />
        <ellipse cx="1190" cy="580" rx="112" ry="42" transform="rotate(-30 1190 580)" fill="url(#warm)" />
        <ellipse cx="1262" cy="572" rx="72" ry="34" transform="rotate(72 1262 572)" fill="url(#warm)" />
        <ellipse cx="1322" cy="450" rx="60" ry="16" transform="rotate(-25 1322 450)" fill="url(#warm)" />
        <ellipse cx="1257" cy="556" rx="42" ry="17" transform="rotate(70 1257 556)" fill="url(#hot)" />
      </g>
      <ellipse cx="830" cy="747" rx="61" ry="24.600" transform="rotate(66.500 830 747)" stroke="#000" fill="red" />
      <path d="m755 777 1.500 5L812 755l4 6 13-15-20-1 1 5z" fill="#1470d8" stroke="#0a4d96" strokeWidth=".8" />
      <path d="m810 745 19 1-13 15 1-10z" fill="#0c56ac" />
      <path d="M1218 613v18l4-4 3.500 7.500 3-1.500-3.500-7h6z" fill="#fff" stroke="#222" />
    </svg>
  );
}

const SCALE = ["40.34589", "28.35732", "16.36876", "4.380192", "-7.608374", "-19.59694", "-31.58550", "-43.57407", "-55.56263"];

function Legend() {
  return (
    <div className="absolute right-[40px] top-[61px] w-[124px] text-[13px] text-black font-['Liberation_Sans',sans-serif]">
      <div className="flex items-center h-[18px] pl-[6px]">
        <select aria-label="Quantity" className="appearance-none w-[104px] outline-none"><option>Pressure</option></select>
        <svg viewBox="0 0 10 9" className="w-[10px] h-[9px]" aria-hidden="true"><path d="M0 0h10L5 9z" /></svg>
      </div>
      <div className="flex items-center h-[18px] mt-2 pl-[6px]">
        <select aria-label="Unit" className="appearance-none w-[60px] outline-none"><option>Pa</option></select>
        <svg viewBox="0 0 10 9" className="w-[10px] h-[9px]" aria-hidden="true"><path d="M0 0h10L5 9z" /></svg>
      </div>
      <div className="flex mt-[5px]">
        <div className="flex flex-col items-center w-[34px] pt-2">
          <div className="w-[34px] h-[6px] bg-[#6d7cc6]" />
          <div className="w-[30px] h-[144px] bg-[linear-gradient(to_bottom,#f00_0%,#ff2a00_8%,#ff8c00_16%,#f5c800_22%,#d8ff00_29%,#5cff00_38%,#10ff10_46%,#00ff66_56%,#00ffd8_66%,#00b4ff_74%,#0070ff_82%,#0010ff_92%,#00f_100%)]" />
          <div className="w-[34px] h-[6px] bg-[#6ba0ee]" />
        </div>
        <ol className="flex flex-col justify-between flex-1 -ml-[2px] pr-[25px] text-right leading-[18px] h-[168px]">
          {SCALE.map((v, i) => (
            <li key={v} className="flex items-center justify-between">
              <span className={`w-[3px] h-px ${i > 0 && i < 8 ? "bg-black" : ""}`} />
              {v}
            </li>
          ))}
        </ol>
      </div>
      <div className="flex items-center pl-[2px]">
        <button type="button" aria-label="Pin" className="flex items-center justify-center w-6 h-[22px] bg-[#a3a3a3]">
          <Svg><path d="m1 15 6-6" stroke="#111" strokeWidth="1.600" /><path d="m4 4.500 2-1 3 1 2.500-2L11 1l1-1 4 4-1 1-1.500-.500-2 2.500 1 3-1 2z" fill="#111" /></Svg>
        </button>
        <button type="button" aria-label="Refresh" className="ml-3">
          <Svg><path d="M8 3.500a5.300 5.300 0 1 0 5 3.500" stroke="#111" strokeWidth="2.600" /><path d="M7 0v7l5-3.500z" fill="#111" /></Svg>
        </button>
        <button type="button" aria-label="Menu" className="ml-4">
          <Svg><path d="M0 3h16M0 8h16M0 13h16" stroke="#111" strokeWidth="2.600" /></Svg>
        </button>
      </div>
    </div>
  );
}

function Triad() {
  return (
    <svg viewBox="1825 938 65 65" className="absolute right-[30px] bottom-[33px] w-[65px] h-[65px] font-['Liberation_Sans',sans-serif] text-[12px]" role="img" aria-label="Axes">
      <path d="M1860 976v-15" stroke="#c01818" strokeWidth="2" />
      <path d="m1860 953-4 11h8z" fill="#f00" />
      <path d="m1860 976-16 7" stroke="#4bbf4b" strokeWidth="2" />
      <path d="m1834 988 8-8 4 5z" fill="#1ee81e" />
      <path d="m1860 976 11 12" stroke="#16168a" strokeWidth="1.500" />
      <path d="m1877 995-10-4 4-6z" fill="#00d" />
      <text x="1858" y="952">X</text>
      <text x="1828" y="991">Y</text>
      <text x="1878" y="999">Z</text>
    </svg>
  );
}

const VIEW_TOOLS: { name: string; icon: React.ReactNode; more?: boolean; active?: boolean }[] = [
  { name: "Refit", icon: <Lens kind="fit" /> },
  { name: "Zoom in", icon: <Lens kind="in" /> },
  { name: "Zoom out", icon: <Lens kind="out" /> },
  { name: "Repaint", icon: <ShadeIcon /> },
  { name: "Rendering", icon: <RenderIcon />, more: true },
  { name: "Display style", icon: <BoxIcon />, more: true },
  { name: "Orientations", icon: <OrientIcon />, more: true },
  { name: "View manager", icon: <CameraListIcon /> },
  { name: "Sections", icon: <ClipIcon /> },
  { name: "Perspective", icon: <DatumIcon />, more: true },
  { name: "Datum display", icon: <AxesIcon />, more: true },
  { name: "Annotations", icon: <AnnotationIcon />, active: true },
  { name: "Spin center", icon: <SpinIcon /> },
  { name: "Simulation", icon: <WarnIcon /> },
  { name: "Pause", icon: <PauseIcon /> },
  { name: "Results", icon: <ResultMutedIcon /> },
];

function Canvas() {
  return (
    <main className="relative flex-1 min-w-0 overflow-hidden bg-white">
      <div className="absolute left-[529px] top-[7px] flex items-center gap-[2px] h-9 px-[3px] border border-[#9ea2a4] bg-[#f8fafb]">
        {VIEW_TOOLS.map((t) => (
          <button
            key={t.name}
            type="button"
            aria-label={t.name}
            className={`relative flex items-center justify-center w-7 h-7 border ${t.active ? "border-[#a8acae] bg-[#dde1e2]" : "border-transparent"}`}
          >
            {t.icon}
            {t.more && <svg viewBox="0 0 4 4" className="absolute -right-px bottom-0 w-1 h-1" aria-hidden="true"><path d="M4 0v4H0z" fill="#444" /></svg>}
          </button>
        ))}
      </div>
      <Venturi />
      <span className="absolute left-[1063px] top-[294px] text-[20px] leading-6 text-[#8080ee] font-['Liberation_Sans',sans-serif] whitespace-nowrap">P = 0 Pa</span>
      <span className="absolute left-[198px] top-[604px] text-[20px] leading-6 text-[#f08080] font-['Liberation_Sans',sans-serif] whitespace-nowrap">VF = 0.01544 m3/s</span>
      <Legend />
      <Triad />
    </main>
  );
}

/* ---------- status bar ---------- */
function StatusBar() {
  const [filter, setFilter] = useState("Geometry");
  return (
    <footer className="flex items-center h-11 pt-[6px] pl-[6px] border-t border-b-2 border-t-[#b1b5b6] border-b-[#3d3d3d] bg-[#f8fafa]">
      <button type="button" aria-label="Navigator" className="flex items-center justify-center w-[26px] h-7 border border-[#a9adaf] bg-[#dde1e2]">
        <Svg>
          <path d="M.5.500h15v15H.5z" fill="#fff" stroke="#7d8386" />
          <path d="M.5 3.500h15M5.500 3.500v12" stroke="#7d8386" />
          <path d="M1 5h4v10H1z" fill="#9bd7f1" stroke={BLUE} strokeWidth=".8" />
          <Eye />
        </Svg>
      </button>
      <button type="button" aria-label="Browser" className="ml-[9px]">
        <Svg>
          <circle cx="8" cy="8.500" r="6" fill="#3a97cc" stroke="#1f6089" />
          <path d="M5 4q3 0 2 3t-3 2zM10 6q3 0 3 3l-3 3z" fill="#d8f0fb" />
          <path d="M2 15Q-1 12 6 6T15 1q2 3-5 9T2 15" stroke="#5c6366" />
        </Svg>
      </button>
      <button type="button" aria-label="Full screen" className="ml-[14px]">
        <Svg><path d="M.5.500h15v15H.5z" fill="url(#paper)" stroke={BLUE} /></Svg>
      </button>
      <span className="w-px h-7 ml-[14px] bg-[#aeb2b4]" />
      <span className="w-[5px] h-[5px] ml-[10px] rounded-full bg-[#24608a]" />
      <p className="ml-[5px]">A feasible solution has been successfully found.</p>
      <div className="flex items-center ml-auto mr-[18px]">
        <span className="w-[34px] h-8 border-x border-[#b5b9ba]" />
        <div className="flex items-center h-8 ml-1 px-[2px] border-x border-[#b5b9ba]">
          <button type="button" aria-label="Find" className="flex items-center justify-center w-8 h-7 border border-[#bfc3c4]">
            <Svg><path d="M3 1h3.500v2H10V1h3v2l2.500 7v5H10v-4H6.500v4H.5v-5L3 3z" fill="#45494b" /><path d="M2.500 7 2 13M11.500 6v7" stroke="#a9adaf" strokeWidth="1.500" /></Svg>
          </button>
          <button type="button" aria-label="Find options" className="flex items-center justify-center w-[18px] h-7 border border-l-0 border-[#bfc3c4]"><Caret /></button>
        </div>
        <div className="relative flex items-center w-[169px] h-[30px] ml-[90px] border border-[#abafb1]">
          <select aria-label="Selection filter" value={filter} onChange={(e) => setFilter(e.target.value)} className="appearance-none w-full h-full pl-[9px] outline-none">
            <option>Geometry</option>
          </select>
          <span className="absolute right-0 flex items-center justify-center w-[19px] h-full border-l border-[#abafb1] pointer-events-none"><Caret /></span>
        </div>
      </div>
    </footer>
  );
}

// Gradients and patterns shared by the icons
function SharedDefs() {
  return (
    <svg className="absolute w-0 h-0" aria-hidden="true">
      <defs>
        <linearGradient id="paper" x1="0" y1="0" x2="1" y2="1"><stop offset="0" stopColor="#fff" /><stop offset="1" stopColor="#d4d9db" /></linearGradient>
        <linearGradient id="sheet" x1="0" y1="0" x2="1" y2="0"><stop offset="0" stopColor="#eefaff" /><stop offset=".6" stopColor="#b4e5f7" /><stop offset="1" stopColor="#c8eefa" /></linearGradient>
        <linearGradient id="flag"><stop offset="0" stopColor="#4fbf45" /><stop offset=".6" stopColor="#5fcf52" /><stop offset="1" stopColor="#a5ea98" /></linearGradient>
        <linearGradient id="rainbow" x1="0" y1="1" x2="1" y2="0"><stop offset="0" stopColor="#37b5e8" /><stop offset=".4" stopColor="#62cf45" /><stop offset=".65" stopColor="#ffd52e" /><stop offset="1" stopColor="#ee4b2b" /></linearGradient>
        <linearGradient id="shade" x1="0" y1="0" x2="1" y2="1"><stop offset="0" stopColor="#d9f1fa" /><stop offset="1" stopColor="#2a7399" /></linearGradient>
        <linearGradient id="metal" x1="0" y1="0" x2="1" y2="1"><stop offset="0" stopColor="#f4f4f4" /><stop offset="1" stopColor="#555" /></linearGradient>
        <linearGradient id="metalSoft"><stop offset="0" stopColor="#a5a8a9" /><stop offset="1" stopColor="#ececec" /></linearGradient>
        <radialGradient id="ballG" cx=".4" cy=".35"><stop offset="0" stopColor="#c5f0b8" /><stop offset="1" stopColor="#2c9431" /></radialGradient>
        <radialGradient id="ballR" cx=".4" cy=".35"><stop offset="0" stopColor="#f5b5b0" /><stop offset="1" stopColor="#bd3030" /></radialGradient>
        <radialGradient id="ballB" cx=".4" cy=".35"><stop offset="0" stopColor="#cfeeff" /><stop offset="1" stopColor="#57ade6" /></radialGradient>
        <pattern id="mesh" width="6" height="6" patternUnits="userSpaceOnUse">
          <path d="M0 0h6v6H0z" fill="#e6f6fc" />
          <path d="m0 3 3-3 3 3-3 3z" fill="none" stroke="#2581aa" strokeWidth="1.200" />
        </pattern>
      </defs>
    </svg>
  );
}

export default function App() {
  return (
    <div className="flex flex-col h-screen overflow-hidden text-[12px] text-[#484d50] font-[Roboto,sans-serif]">
      <SharedDefs />
      <TitleBar />
      <TabBar />
      <Ribbon />
      <div className="flex flex-1 min-h-0">
        <LeftPanel />
        <Canvas />
      </div>
      <StatusBar />
    </div>
  );
}
